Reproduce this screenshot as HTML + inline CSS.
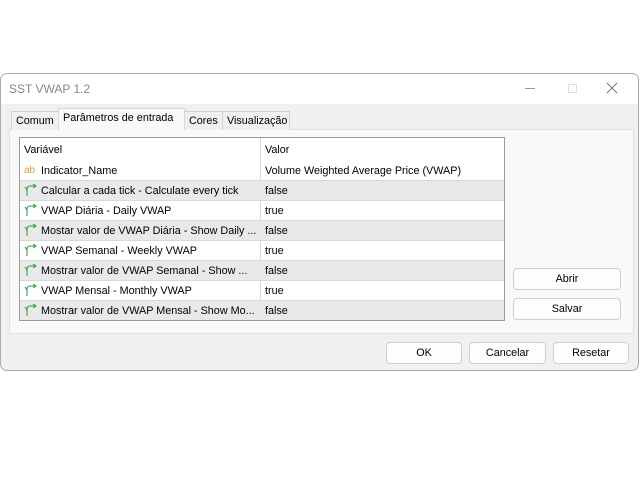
<!DOCTYPE html>
<html><head><style>
*{box-sizing:border-box;margin:0;padding:0}
body{width:640px;height:480px;background:#fff;font-family:"Liberation Sans",sans-serif;font-size:10.8px;color:#000;position:relative;overflow:hidden}
.win{position:absolute;left:0;top:73px;width:639px;height:298px;border:1px solid #aaa;border-radius:7px;background:#f0f0f0;overflow:hidden}
.title{position:absolute;left:0;top:0;width:100%;height:30px;background:#fff;}
.title span{position:absolute;left:8px;top:8px;color:#888;font-size:12px}
.ab{position:absolute;}
.tab{position:absolute;top:37px;height:19px;padding:3px 4px;white-space:nowrap;border:1px solid #d0d0d0;border-bottom:none;background:#f0f0f0}
.panel{position:absolute;left:8px;top:55px;width:625px;height:205px;background:#f9f9f9;border:1px solid #e0e0e0}
.tbl{position:absolute;left:18px;top:63px;width:486px;height:184px;border:1px solid #9a9a9a;background:#fff;overflow:hidden}
.row{position:absolute;left:0;width:484px;height:20px;border-bottom:1px solid #d8d8d8}
.row.g{background:#e9e9e9}
.c1{position:absolute;left:4px;top:3px;width:236px;white-space:nowrap;overflow:hidden;line-height:14px;height:14px}
.c2{position:absolute;left:245px;top:3px;white-space:nowrap;line-height:14px}
.vd{position:absolute;left:240px;top:0;width:1px;height:184px;background:#d8d8d8}
.ic{display:inline-block;width:14px;margin-right:3px;vertical-align:-2px}
.btn{position:absolute;height:22px;background:#fdfdfd;border:1px solid #cfcfcf;border-radius:4px;text-align:center;line-height:20px}
</style></head><body>
<div class="win">
<div class="title"><span>SST VWAP 1.2</span>
<div class="ab" style="left:524px;top:14px;width:10px;height:1px;background:#999"></div>
<div class="ab" style="left:567px;top:10px;width:9px;height:9px;border:1px solid #ddd"></div>
<svg class="ab" style="left:605px;top:8px" width="12" height="12"><path d="M1 1L11 11M11 1L1 11" stroke="#777" stroke-width="1"/></svg>
</div>
<div class="panel"></div>
<div class="tab" style="left:10px;width:48px">Comum</div>
<div class="tab" style="left:57px;top:34px;height:22px;width:127px;background:#f9f9f9;border-color:#d8d8d8;z-index:2">Parâmetros de entrada</div>
<div class="tab" style="left:183px;width:39px">Cores</div>
<div class="tab" style="left:221px;width:68px">Visualização</div>
<div class="tbl">
<div class="vd"></div>
<div class="row" style="top:0;height:23px;border:none"><div class="c1" style="top:5px">Variável</div><div class="c2" style="top:5px">Valor</div></div>
<div class="row" style="top:23px"><div class="c1"><span class="ic" style="color:#d4a050;font-size:10px;vertical-align:1px">ab</span>Indicator_Name</div><div class="c2">Volume Weighted Average Price (VWAP)</div></div>
<div class="row g" style="top:43px"><div class="c1"><svg class="ic" width="14" height="12"><path d="M3 12V5Q3 2 7 2H12M9 0L12 2L9 4M3 6L1 3" stroke="#2a9a3a" fill="none"/></svg>Calcular a cada tick - Calculate every tick</div><div class="c2">false</div></div>
<div class="row" style="top:63px"><div class="c1"><svg class="ic" width="14" height="12"><path d="M3 12V5Q3 2 7 2H12M9 0L12 2L9 4M3 6L1 3" stroke="#2a9a3a" fill="none"/></svg>VWAP Diária - Daily VWAP</div><div class="c2">true</div></div>
<div class="row g" style="top:83px"><div class="c1"><svg class="ic" width="14" height="12"><path d="M3 12V5Q3 2 7 2H12M9 0L12 2L9 4M3 6L1 3" stroke="#2a9a3a" fill="none"/></svg>Mostar valor de VWAP Diária - Show Daily ...</div><div class="c2">false</div></div>
<div class="row" style="top:103px"><div class="c1"><svg class="ic" width="14" height="12"><path d="M3 12V5Q3 2 7 2H12M9 0L12 2L9 4M3 6L1 3" stroke="#2a9a3a" fill="none"/></svg>VWAP Semanal - Weekly VWAP</div><div class="c2">true</div></div>
<div class="row g" style="top:123px"><div class="c1"><svg class="ic" width="14" height="12"><path d="M3 12V5Q3 2 7 2H12M9 0L12 2L9 4M3 6L1 3" stroke="#2a9a3a" fill="none"/></svg>Mostrar valor de VWAP Semanal - Show ...</div><div class="c2">false</div></div>
<div class="row" style="top:143px"><div class="c1"><svg class="ic" width="14" height="12"><path d="M3 12V5Q3 2 7 2H12M9 0L12 2L9 4M3 6L1 3" stroke="#2a9a3a" fill="none"/></svg>VWAP Mensal - Monthly VWAP</div><div class="c2">true</div></div>
<div class="row g" style="top:163px"><div class="c1"><svg class="ic" width="14" height="12"><path d="M3 12V5Q3 2 7 2H12M9 0L12 2L9 4M3 6L1 3" stroke="#2a9a3a" fill="none"/></svg>Mostrar valor de VWAP Mensal - Show Mo...</div><div class="c2">false</div></div>
</div>
<div class="btn" style="left:512px;top:194px;width:108px">Abrir</div>
<div class="btn" style="left:512px;top:224px;width:108px">Salvar</div>
<div class="btn" style="left:385px;top:268px;width:76px">OK</div>
<div class="btn" style="left:468px;top:268px;width:77px">Cancelar</div>
<div class="btn" style="left:552px;top:268px;width:76px">Resetar</div>
</div>
</body></html>
